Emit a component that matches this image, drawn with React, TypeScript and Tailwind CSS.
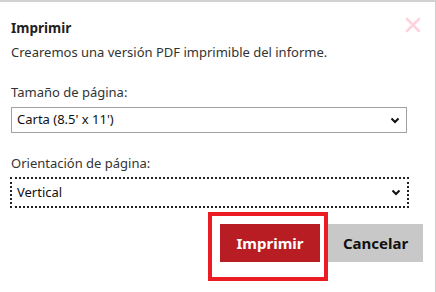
const Chevron = () => (
  <svg width="10" height="7" viewBox="0 0 10 7" className="shrink-0">
    <path d="M1.5 1.5 L5 5 L8.5 1.5" fill="none" stroke="#111" strokeWidth="2" />
  </svg>
);

const FakeSelect = ({ value, focused }: { value: string; focused?: boolean }) => (
  <div
    className={
      focused
        ? "flex h-[31px] items-center justify-between border-2 border-dotted border-[#222] bg-white pl-[5px] pr-[6px]"
        : "flex h-[26px] items-center justify-between border border-[#a0a0a0] bg-white pl-[5px] pr-[6px]"
    }
  >
    <span className="text-[13px] text-[#111]">{value}</span>
    <Chevron />
  </div>
);

export default function App() {
  return (
    <div
      className="relative h-[292px] w-[436px] overflow-hidden border-t-2 border-r border-t-[#d2d2d2] border-r-[#cfcfcf] bg-white text-[#333]"
      style={{ fontFamily: '"Noto Sans", "Open Sans", sans-serif' }}
    >
      <div className="flex items-start justify-between pl-[11px] pr-[14px] pt-[15px]">
        <h2 className="mt-px text-[13.5px] font-bold leading-[20px] text-[#222]">Imprimir</h2>
        <svg width="16" height="16" viewBox="0 0 16 16">
          <path d="M2 2 L14 14 M14 2 L2 14" stroke="#ffd3dd" strokeWidth="2.6" strokeLinecap="round" />
        </svg>
      </div>
      <p className="mt-[4px] pl-[11px] text-[13px] leading-[20px]">
        Crearemos una versión PDF imprimible del informe.
      </p>

      <div className="mt-[20px] px-[11px] pr-[28px]">
        <label className="block text-[13px] leading-[20px]">Tamaño de página:</label>
        <div className="mt-[5px]">
          <FakeSelect value="Carta (8.5' x 11')" />
        </div>
      </div>

      <div className="mt-[20px] pl-[10px] pr-[26px]">
        <label className="block pl-px text-[13px] leading-[20px]">Orientación de página:</label>
        <div className="mt-[4px]">
          <FakeSelect value="Vertical" focused />
        </div>
      </div>

      <div className="mt-[16px] flex justify-end gap-[8px] pr-[12px]">
        <button className="h-[38px] w-[100px] bg-[#b81d24] text-[15px] font-bold text-white">
          Imprimir
        </button>
        <button className="h-[38px] w-[95px] bg-[#c8c8c8] text-[15px] font-bold text-[#111]">
          Cancelar
        </button>
      </div>

      <div className="pointer-events-none absolute left-[208px] top-[210px] h-[69px] w-[120px] border-4 border-[#ec1c24]" />
    </div>
  );
}
